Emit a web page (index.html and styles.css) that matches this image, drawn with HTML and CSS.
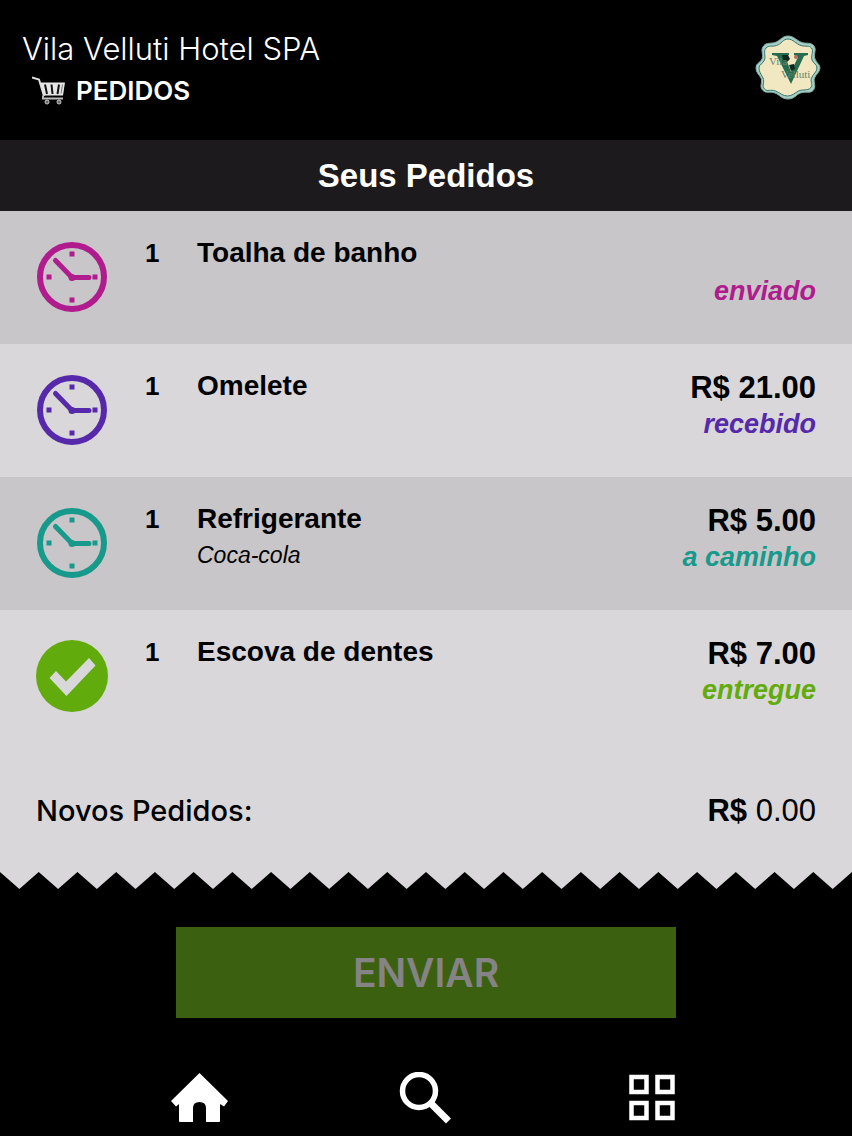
FILE: index.html
```
<!DOCTYPE html>
<html lang="pt-BR">
<head>
  <meta charset="UTF-8">
  <meta name="viewport" content="width=device-width, initial-scale=1.0">
  <title>Pedidos | Vila Velluti Hotel SPA</title>
  <link rel="stylesheet" href="styles.css">
</head>
<body>
  <svg class="defs" aria-hidden="true">
    <symbol id="clock" viewBox="0 0 72 72">
      <circle cx="36" cy="36" r="32" fill="none" stroke="currentColor" stroke-width="6"/>
      <path d="M19.500 19.500 36 36.500h17" fill="none" stroke="currentColor" stroke-width="5" stroke-linecap="round" stroke-linejoin="round"/>
      <circle cx="36" cy="36.500" r="3.500" fill="currentColor"/>
      <path d="M33.500 10.500h5v5h-5zM33.500 56.500h5v5h-5zM10.500 33.500h5v5h-5zM56.500 33.500h5v5h-5z" fill="currentColor"/>
    </symbol>
    <symbol id="check" viewBox="0 0 72 72">
      <circle cx="36" cy="36" r="36" fill="currentColor"/>
      <path d="M13.500 38 20 31l10 10.500 23-23.500 6.500 7.500L30.500 56z" fill="#d9d7d9"/>
    </symbol>
  </svg>

  <header class="header">
    <div class="header-text">
      <p class="hotel">Vila Velluti Hotel SPA</p>
      <h1 class="section">
        <svg class="cart" viewBox="0 0 34 30" aria-hidden="true">
          <path d="M0 1.500 7 3.500 12 20" fill="none" stroke="#ddd" stroke-width="2"/>
          <path d="M8.500 6.500H33L31 19.500H12z" fill="#e6e6e6"/>
          <path d="M13 8.500 15 18M19.500 8.500 20.500 18M27 8.500 25.500 18" stroke="#111" stroke-width="2"/>
          <path d="M30.500 8.500 29 17.500" stroke="#777"/>
          <path d="M11 19.500v3h20" fill="none" stroke="#bbb" stroke-width="2"/>
          <circle cx="15" cy="26" r="2" fill="#666" stroke="#ccc"/>
          <circle cx="27" cy="26" r="2" fill="#666" stroke="#ccc"/>
        </svg>
        PEDIDOS
      </h1>
    </div>
    <svg class="logo" viewBox="0 0 66 66" role="img" aria-label="Vila Velluti">
      <path d="M33 1C39 1 42 6 47 7.500S56 7 59 11s-1 8 1 13 5 5 5 9-4 6-5.500 10 2 8-1 12-8 1-13 3-6 6-12.500 6-8-4-13-6-9 1-12.500-3 .500-8-1.500-12S1 38 1 33s4-5 6-9-2-9 1.500-13S15 9 20 7.500 27 1 33 1z" fill="#a8cfc6" stroke="#7daaa3"/>
      <path d="M33 4C38 4 41 9 46 10.500S54 10 56.500 13s-1 8 .5 12 5 4 5 8-4 6-5.500 10 2 7-1 10-8 1-12 3-6 5-11 5-7-3-12-5-8 1-11-2 .500-7-1.500-11S4 37 4 33s4-4 5.500-8-1.500-9 1.500-12 5.500-1 10.500-2.500S28 4 33 4z" fill="#f1e8c2" stroke="#35766c"/>
      <path d="M17 18h17v2l-4 1 6 16 7-15-4-2v-2h14v2l-4 1-13 28L22 21l-5-1z" fill="#286c50"/>
      <path d="M27 20h6l2 4-3 3-4-2zM34 30l5-1 1 5-4 2z" fill="#10291f"/>
      <circle cx="41" cy="22" r="2" fill="#b96b60"/>
      <text class="logo-name" x="14" y="30">Vila</text>
      <text class="logo-name" x="26" y="43">Velluti</text>
    </svg>
  </header>

  <main>
    <h2 class="title">Seus Pedidos</h2>

    <ul class="orders">
      <li class="order enviado">
        <svg class="icon" aria-hidden="true"><use href="#clock"/></svg>
        <span class="qty">1</span>
        <div class="item"><h3>Toalha de banho</h3></div>
        <div class="info"><em class="status">enviado</em></div>
      </li>
      <li class="order recebido">
        <svg class="icon" aria-hidden="true"><use href="#clock"/></svg>
        <span class="qty">1</span>
        <div class="item"><h3>Omelete</h3></div>
        <div class="info"><span class="price">R$ 21.00</span><em class="status">recebido</em></div>
      </li>
      <li class="order caminho">
        <svg class="icon" aria-hidden="true"><use href="#clock"/></svg>
        <span class="qty">1</span>
        <div class="item"><h3>Refrigerante</h3><p>Coca-cola</p></div>
        <div class="info"><span class="price">R$ 5.00</span><em class="status">a caminho</em></div>
      </li>
      <li class="order entregue">
        <svg class="icon" aria-hidden="true"><use href="#check"/></svg>
        <span class="qty">1</span>
        <div class="item"><h3>Escova de dentes</h3></div>
        <div class="info"><span class="price">R$ 7.00</span><em class="status">entregue</em></div>
      </li>
    </ul>

    <div class="total">
      <span>Novos Pedidos:</span>
      <span class="total-value"><b>R$</b> 0.00</span>
    </div>
    <svg class="zigzag" viewBox="0 0 44 17" preserveAspectRatio="none" aria-hidden="true">
      <path d="M0 0 1 17 2 0 3 17 4 0 5 17 6 0 7 17 8 0 9 17 10 0 11 17 12 0 13 17 14 0 15 17 16 0 17 17 18 0 19 17 20 0 21 17 22 0 23 17 24 0 25 17 26 0 27 17 28 0 29 17 30 0 31 17 32 0 33 17 34 0 35 17 36 0 37 17 38 0 39 17 40 0 41 17 42 0 43 17 44 0z" fill="#d9d7d9"/>
    </svg>

    <div class="actions">
      <button class="send" type="button" disabled>ENVIAR</button>
    </div>
  </main>

  <nav class="tabs">
    <a href="#inicio" aria-label="Início">
      <svg viewBox="0 0 58 52" aria-hidden="true">
        <path d="M29.500 1 58 29 54 34.500 50 32V49q0 1-1 1H36V36q0-6-6.500-6T23 36V50H10q-1 0-1-1V32L6 34.500 1 29z" fill="#fff"/>
      </svg>
    </a>
    <a href="#busca" aria-label="Buscar">
      <svg viewBox="0 0 58 52" aria-hidden="true">
        <circle cx="22" cy="19" r="16.500" fill="none" stroke="#fff" stroke-width="5.500"/>
        <path d="M33.500 31 51.500 49" stroke="#fff" stroke-width="7"/>
      </svg>
    </a>
    <a href="#menu" aria-label="Menu">
      <svg viewBox="0 0 58 52" aria-hidden="true">
        <path d="M7.500 5h15v15h-15zM33.500 5h15v15h-15zM7.500 31h15v15h-15zM33.500 31h15v15h-15z" fill="none" stroke="#fff" stroke-width="4.500"/>
      </svg>
    </a>
  </nav>
</body>
</html>
```

FILE: styles.css
```
:root {
  --dark: #1c1a1c;
  --row: #c8c6c8;
  --row-alt: #d9d7d9;
}
*, *::before, *::after {
  box-sizing: border-box;
}
body, h1, h2, h3, p, ul {
  margin: 0;
  padding: 0;
}
body {
  font-family: "Liberation Sans", Arial, Helvetica, sans-serif;
  background: #000;
  color: #000;
}
.defs {
  display: none;
}

/* header */
.header {
  display: flex;
  justify-content: space-between;
  align-items: flex-start;
  padding: 29px 31px 27px 22px;
  color: #fff;
}
.hotel {
  font-family: Inter, "Liberation Sans", sans-serif;
  font-size: 31px;
  font-weight: 300;
  line-height: 40px;
}
.section {
  display: flex;
  align-items: center;
  gap: 10px;
  padding-left: 10px;
  font-family: Inter, "Liberation Sans", sans-serif;
  font-size: 26px;
  font-weight: 600;
  line-height: 44px;
}
.cart {
  width: 34px;
  height: 30px;
}
.logo {
  width: 66px;
  height: 66px;
  margin-top: 6px;
}
.logo-name {
  font-family: "Liberation Serif", serif;
  font-size: 11px;
  fill: #66836b;
}
.title {
  background: var(--dark);
  color: #fff;
  font-size: 33px;
  line-height: 71px;
  text-align: center;
}

/* orders */
.orders {
  list-style: none;
}
.order {
  display: grid;
  grid-template-columns: 72px 52px 1fr auto;
  align-items: start;
  min-height: 133px;
  padding: 24px 36px 0;
  background: var(--row);
}
.order:nth-child(even) {
  background: var(--row-alt);
}
.icon {
  width: 72px;
  height: 72px;
  margin-top: 6px;
}
.qty {
  padding-left: 37px;
  font-size: 26px;
  font-weight: bold;
  line-height: 36px;
}
.item {
  padding-left: 37px;
}
.item h3 {
  font-size: 28px;
  line-height: 36px;
}
.item p {
  font-size: 23px;
  font-style: italic;
  line-height: 36px;
}
.info {
  display: flex;
  flex-direction: column;
  justify-content: flex-end;
  height: 74px;
  text-align: right;
}
.price {
  font-size: 31px;
  font-weight: bold;
  line-height: 36px;
}
.status {
  font-size: 27px;
  font-weight: bold;
  line-height: 36px;
}
.enviado .icon, .enviado .status {
  color: #b01b8e;
}
.recebido .icon, .recebido .status {
  color: #5629ab;
}
.caminho .icon, .caminho .status {
  color: #17998c;
}
.entregue .icon, .entregue .status {
  color: #62ab0c;
}

/* total */
.total {
  display: flex;
  justify-content: space-between;
  padding: 48px 36px 41px;
  background: var(--row-alt);
  font-family: Inter, "Liberation Sans", sans-serif;
  font-size: 29px;
  font-weight: 500;
  line-height: 40px;
}
.total-value {
  font-family: "Liberation Sans", Arial, sans-serif;
  font-size: 31px;
  font-weight: 400;
}
.zigzag {
  display: block;
  width: 100%;
  height: 17px;
}

.actions {
  display: flex;
  justify-content: center;
  padding: 38px 36px;
}
.send {
  width: 64%;
  height: 91px;
  border: 0;
  background: #3b6110;
  color: #858385;
  font-family: Inter, "Liberation Sans", sans-serif;
  font-size: 39px;
  font-weight: 600;
}

/* bottom tabs */
.tabs {
  display: grid;
  grid-template-columns: repeat(3, 1fr);
  padding: 16px 86px 0;
}
.tabs a {
  display: flex;
  justify-content: center;
}
.tabs svg {
  width: 58px;
  height: 52px;
}
```
